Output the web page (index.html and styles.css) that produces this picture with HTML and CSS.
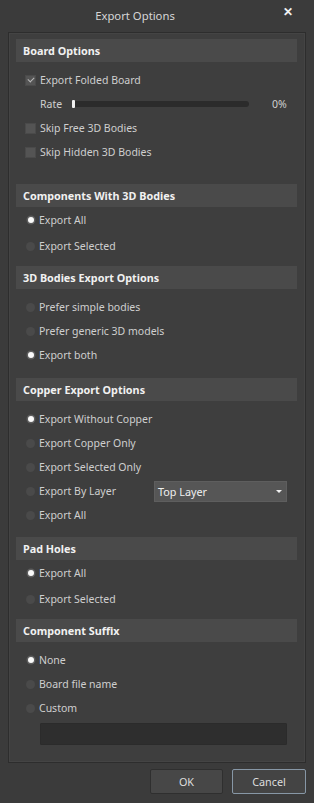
FILE: index.html
```html
<!doctype html>
<html>

<head>
  <meta charset="UTF-8">
  <meta name="viewport" content="width=device-width, initial-scale=1.0">
  <title>Export Options</title>
  <link rel="stylesheet" href="styles.css">
</head>

<body>
  <div class="titlebar">
    <span class="title">Export Options</span>
    <span class="close">&#x2715;</span>
  </div>

  <div class="panel">
    <div class="section gap-20">
      <div class="head">Board Options</div>
      <div class="rows">
        <div class="row"><span class="check on"></span>Export Folded Board</div>
        <div class="row rate">
          <span class="rate-label">Rate</span>
          <span class="track"><span class="thumb"></span></span>
          <span class="pct">0%</span>
        </div>
        <div class="row"><span class="check"></span>Skip Free 3D Bodies</div>
        <div class="row"><span class="check"></span>Skip Hidden 3D Bodies</div>
      </div>
    </div>

    <div class="section gap-7">
      <div class="head">Components With 3D Bodies</div>
      <div class="rows tight">
        <div class="row"><span class="radio on"></span>Export All</div>
        <div class="row"><span class="radio"></span>Export Selected</div>
      </div>
    </div>

    <div class="section gap-11">
      <div class="head">3D Bodies Export Options</div>
      <div class="rows">
        <div class="row"><span class="radio"></span>Prefer simple bodies</div>
        <div class="row"><span class="radio"></span>Prefer generic 3D models</div>
        <div class="row"><span class="radio on"></span>Export both</div>
      </div>
    </div>

    <div class="section gap-10">
      <div class="head">Copper Export Options</div>
      <div class="rows">
        <div class="row"><span class="radio on"></span>Export Without Copper</div>
        <div class="row"><span class="radio"></span>Export Copper Only</div>
        <div class="row"><span class="radio"></span>Export Selected Only</div>
        <div class="row">
          <span class="radio"></span><span class="by-layer">Export By Layer</span>
          <div class="select">Top Layer<span class="caret"></span></div>
        </div>
        <div class="row"><span class="radio"></span>Export All</div>
      </div>
    </div>

    <div class="section gap-7">
      <div class="head">Pad Holes</div>
      <div class="rows tight">
        <div class="row"><span class="radio on"></span>Export All</div>
        <div class="row"><span class="radio"></span>Export Selected</div>
      </div>
    </div>

    <div class="section">
      <div class="head">Component Suffix</div>
      <div class="rows">
        <div class="row"><span class="radio on"></span>None</div>
        <div class="row"><span class="radio"></span>Board file name</div>
        <div class="row"><span class="radio"></span>Custom</div>
      </div>
      <div class="custom-input"></div>
    </div>
  </div>

  <div class="buttons">
    <button class="btn">OK</button>
    <button class="btn cancel">Cancel</button>
  </div>
</body>

</html>
```

FILE: styles.css
```css
* {
  margin: 0;
  padding: 0;
  box-sizing: border-box;
}

body {
  background: #3b3b3b;
  color: #cfcfcf;
  font-family: "Noto Sans", "Open Sans", sans-serif;
  font-size: 10.5px;
  width: 314px;
  height: 803px;
  overflow: hidden;
}

.titlebar {
  height: 32px;
  position: relative;
  display: flex;
  align-items: center;
  justify-content: center;
  padding: 0 44px 1px 0;
}

.title {
  font-size: 11.3px;
  color: #d6d6d6;
}

.close {
  position: absolute;
  right: 21px;
  top: 3px;
  font-size: 12px;
  font-weight: bold;
  color: #f2f2f2;
}

.panel {
  margin: 0 8px;
  border: 1px solid #2d2d2d;
  box-shadow: inset 0 0 0 1px #444;
  background: #3e3e3e;
  padding: 6px 8px 18px 7px;
  height: 731px;
}

.head {
  background: #4a4a4a;
  height: 23px;
  line-height: 23px;
  padding-left: 7px;
  font-weight: bold;
  color: #f1f1f1;
  font-size: 10.8px;
}

.gap-20 { margin-bottom: 20px; }
.gap-7 { margin-bottom: 7px; }
.gap-11 { margin-bottom: 11px; }
.gap-10 { margin-bottom: 10px; }

.rows {
  padding-top: 6px;
}

.rows .row {
  height: 24px;
}

.rows.tight {
  padding-top: 0;
}

.rows.tight .row {
  height: 26px;
}

.row {
  display: flex;
  align-items: center;
  padding-left: 9px;
}

.check {
  width: 11px;
  height: 11px;
  background: #545454;
  border: 1px solid #4a4a4a;
  margin-right: 4px;
  position: relative;
}

.check.on::after {
  content: "";
  position: absolute;
  left: 2px;
  top: 1px;
  width: 5px;
  height: 3px;
  border-left: 1.5px solid #b8b8b8;
  border-bottom: 1.5px solid #b8b8b8;
  transform: rotate(-45deg);
}

.radio {
  width: 9px;
  height: 9px;
  border-radius: 50%;
  background: #4a4a4a;
  margin-left: 1px;
  margin-right: 4px;
}

.radio.on {
  background: #fafafa;
  box-shadow: 0 0 0 1.5px #5e5e5e;
  width: 6px;
  height: 6px;
  margin: 0 5px 0 3px;
}

.rate {
  padding-left: 24px;
}

.rate-label {
  width: 33px;
}

.track {
  width: 176px;
  height: 6px;
  border-radius: 3px;
  background: #2b2b2b;
  position: relative;
}

.thumb {
  position: absolute;
  left: -1px;
  top: -1px;
  width: 3px;
  height: 8px;
  border-radius: 1px;
  background: #f0f0f0;
}

.pct {
  margin-left: 23px;
}

.by-layer {
  width: 115px;
}

.select {
  width: 133px;
  height: 21px;
  background: #565656;
  border: 1px solid #5e5e5e;
  color: #f0f0f0;
  display: flex;
  align-items: center;
  padding-left: 3px;
  position: relative;
  font-size: 10.8px;
}

.caret {
  position: absolute;
  right: 4px;
  top: 8px;
  border-left: 3px solid transparent;
  border-right: 3px solid transparent;
  border-top: 3px solid #f0f0f0;
}

.custom-input {
  margin: 3px 10px 0 24px;
  height: 22px;
  background: #2e2e2e;
  border: 1px solid #2b2b2b;
  border-radius: 1px;
}

.buttons {
  display: flex;
  justify-content: flex-end;
  gap: 9px;
  padding: 6px 8px 0 0;
}

.btn {
  width: 73px;
  height: 25px;
  background: #474747;
  border: 1px solid #2f2f2f;
  border-radius: 2px;
  color: #dedede;
  font-family: "Noto Sans", "Open Sans", sans-serif;
  font-size: 10.8px;
}

.btn.cancel {
  width: 74px;
  background: #444;
  border-color: #8797a6;
}
```
